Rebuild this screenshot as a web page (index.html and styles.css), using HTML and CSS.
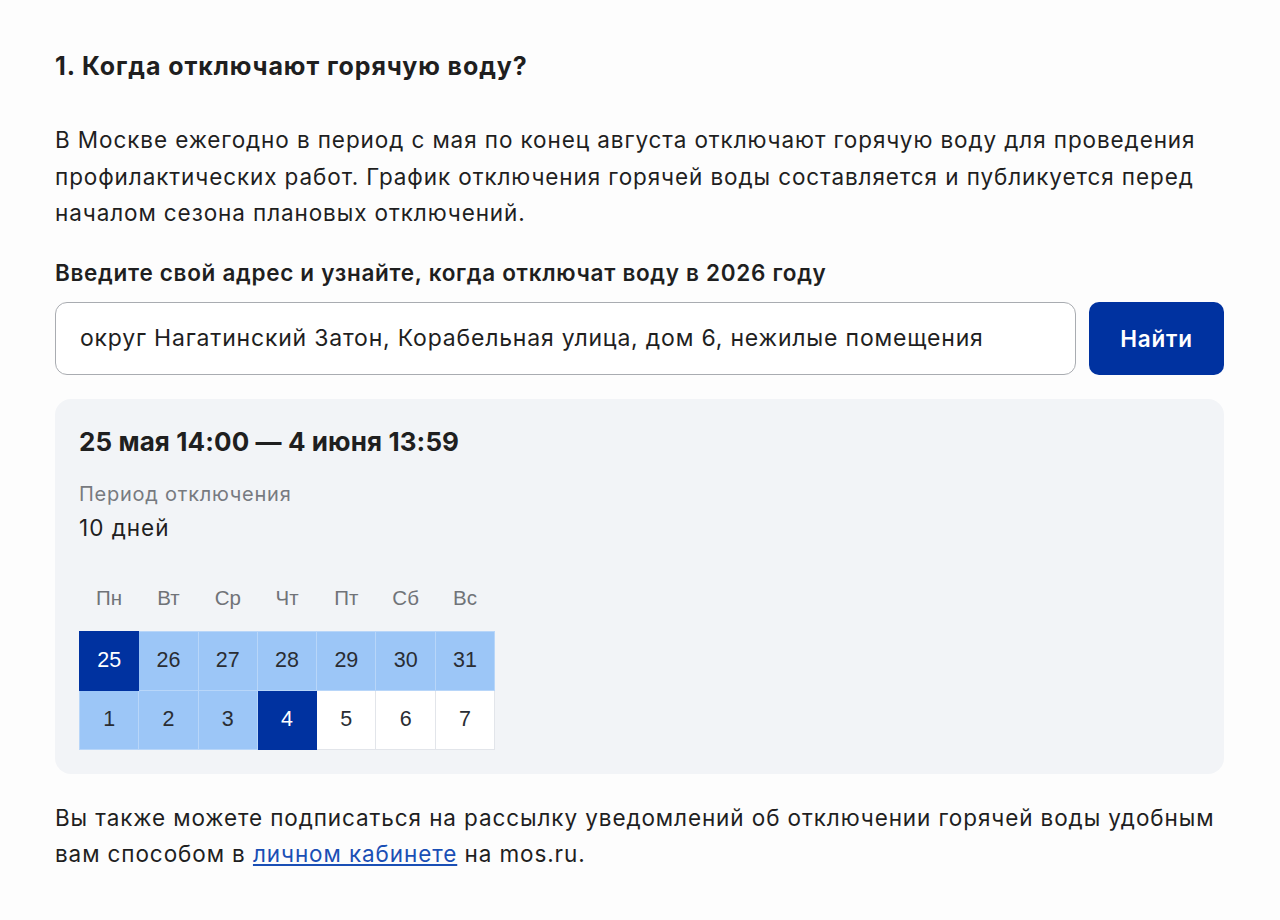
FILE: index.html
```html
<!DOCTYPE html>
<html lang="ru">
<head>
  <meta charset="UTF-8" />
  <meta name="viewport" content="width=device-width, initial-scale=1.0" />
  <title>Отключение горячей воды</title>
  <link rel="stylesheet" href="styles.css">
</head>
<body>
  <main class="faq">
    <h2 class="faq-title">1. Когда отключают горячую воду?</h2>
    <p class="faq-text">В Москве ежегодно в период с мая по конец августа отключают горячую воду для проведения профилактических работ. График отключения горячей воды составляется и публикуется перед началом сезона плановых отключений.</p>

    <form class="search" onsubmit="return false">
      <label class="search-label" for="address">Введите свой адрес и узнайте, когда отключат воду в 2026 году</label>
      <div class="search-row">
        <input id="address" class="search-input" type="text" value="округ Нагатинский Затон, Корабельная улица, дом 6, нежилые помещения">
        <button class="search-btn" type="submit">Найти</button>
      </div>
    </form>

    <section class="result">
      <h3 class="result-dates">25 мая 14:00 — 4 июня 13:59</h3>
      <div class="result-caption">Период отключения</div>
      <div class="result-value">10 дней</div>

      <table class="calendar">
        <thead>
          <tr>
            <th>Пн</th><th>Вт</th><th>Ср</th><th>Чт</th><th>Пт</th><th>Сб</th><th>Вс</th>
          </tr>
        </thead>
        <tbody>
          <tr>
            <td class="edge">25</td>
            <td class="off">26</td>
            <td class="off">27</td>
            <td class="off">28</td>
            <td class="off">29</td>
            <td class="off">30</td>
            <td class="off">31</td>
          </tr>
          <tr>
            <td class="off">1</td>
            <td class="off">2</td>
            <td class="off">3</td>
            <td class="edge">4</td>
            <td>5</td>
            <td>6</td>
            <td>7</td>
          </tr>
        </tbody>
      </table>
    </section>

    <p class="faq-text faq-note">Вы также можете подписаться на рассылку уведомлений об отключении горячей воды удобным вам способом в <a href="#">личном кабинете</a> на mos.ru.</p>
  </main>
</body>
</html>
```

FILE: styles.css
```css
:root {
  --text: #1f1f1f;
  --muted: #777a80;
  --brand: #0032a0;
  --light: #9cc6f7;
  --card: #f2f4f7;
}
* {
  margin: 0;
  padding: 0;
  box-sizing: border-box;
}
body {
  font-family: Inter, "Noto Sans", sans-serif;
  background: #fdfdfd;
  color: var(--text);
}
.faq {
  padding: 48px 56px 0 55px;
}
.faq-title {
  font-size: 25px;
  font-weight: 700;
  letter-spacing: 0.9px;
  line-height: 36px;
  margin-bottom: 38px;
}
.faq-text {
  font-size: 22.5px;
  letter-spacing: 0.9px;
  line-height: 36.5px;
}
.search {
  margin-top: 23px;
}
.search-label {
  display: block;
  font-size: 22.5px;
  font-weight: 600;
  letter-spacing: 0.7px;
  line-height: 36px;
  margin-bottom: 11px;
}
.search-row {
  display: flex;
  gap: 13px;
}
.search-input {
  flex: 1;
  height: 73px;
  padding: 0 24px;
  border: 1px solid #a9acb1;
  border-radius: 12px;
  background: #fff;
  font-family: inherit;
  font-size: 23px;
  letter-spacing: 0.8px;
  color: var(--text);
}
.search-btn {
  width: 135px;
  height: 73px;
  border: none;
  border-radius: 10px;
  background: var(--brand);
  color: #fff;
  font-family: inherit;
  font-size: 22.5px;
  font-weight: 600;
  letter-spacing: 0.8px;
  cursor: pointer;
}
.result {
  margin-top: 24px;
  background: var(--card);
  border-radius: 16px;
  padding: 23px 24px 24px;
}
.result-dates {
  font-size: 26px;
  font-weight: 700;
  letter-spacing: 0.1px;
  line-height: 40px;
  margin-bottom: 17px;
}
.result-caption {
  font-size: 20px;
  letter-spacing: 0.75px;
  line-height: 30px;
  color: var(--muted);
}
.result-value {
  font-size: 22.5px;
  letter-spacing: 1px;
  line-height: 34px;
  margin-top: 2px;
}
.calendar {
  margin-top: 41px;
  border-collapse: collapse;
  font-family: "Liberation Sans", Arial, sans-serif;
  font-size: 20.5px;
}
.calendar th {
  width: 59.3px;
  height: 30px;
  padding-bottom: 21px;
  font-weight: 400;
  color: #707378;
}
.calendar td {
  width: 59.3px;
  height: 59px;
  text-align: center;
  font-size: 21.5px;
  background: #fff;
  border: 1px solid #e2e5ea;
  color: #2a2d33;
}
.calendar td.off {
  background: var(--light);
  border-color: #b8d6f9;
}
.calendar td.edge {
  background: var(--brand);
  border-color: var(--brand);
  color: #fff;
}
.faq-note {
  margin-top: 26px;
}
.faq-note a {
  color: #1a4fb5;
}
```
